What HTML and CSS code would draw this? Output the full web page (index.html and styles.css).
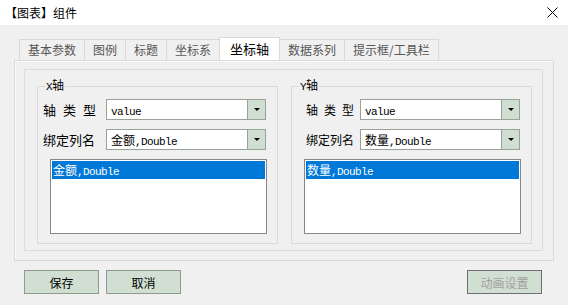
FILE: index.html
```html
<!DOCTYPE html>
<html lang="zh-CN">
<head>
    <meta charset="UTF-8">
    <title>【图表】组件</title>
    <link rel="stylesheet" href="styles.css">
</head>
<body>
    <div class="titlebar">
        <span class="title">【图表】组件</span>
        <svg class="close" width="11" height="11" viewBox="0 0 11 11">
            <path d="M0.5 0.5 L10.5 10.5 M10.5 0.5 L0.5 10.5" stroke="#000" stroke-width="1" fill="none"/>
        </svg>
    </div>

    <div class="tabs">
        <div class="tab first">基本参数</div>
        <div class="tab">图例</div>
        <div class="tab">标题</div>
        <div class="tab">坐标系</div>
        <div class="tab active">坐标轴</div>
        <div class="tab">数据系列</div>
        <div class="tab">提示框/工具栏</div>
    </div>

    <div class="panel">
        <div class="frame">
            <fieldset class="group group-x">
                <legend><span class="mono">X</span>轴</legend>
                <div class="row">
                    <span class="field-label spaced">轴类型</span>
                    <div class="combo">
                        <span class="combo-text"><span class="mono">value</span></span>
                        <span class="combo-btn"><i class="arrow"></i></span>
                    </div>
                </div>
                <div class="row">
                    <span class="field-label">绑定列名</span>
                    <div class="combo">
                        <span class="combo-text">金额<span class="mono">,Double</span></span>
                        <span class="combo-btn"><i class="arrow"></i></span>
                    </div>
                </div>
                <div class="listbox">
                    <div class="list-item">金额<span class="mono">,Double</span></div>
                </div>
            </fieldset>

            <fieldset class="group group-y">
                <legend><span class="mono">Y</span>轴</legend>
                <div class="row">
                    <span class="field-label spaced">轴类型</span>
                    <div class="combo">
                        <span class="combo-text"><span class="mono">value</span></span>
                        <span class="combo-btn"><i class="arrow"></i></span>
                    </div>
                </div>
                <div class="row">
                    <span class="field-label">绑定列名</span>
                    <div class="combo">
                        <span class="combo-text">数量<span class="mono">,Double</span></span>
                        <span class="combo-btn"><i class="arrow"></i></span>
                    </div>
                </div>
                <div class="listbox">
                    <div class="list-item">数量<span class="mono">,Double</span></div>
                </div>
            </fieldset>
        </div>
    </div>

    <div class="actions">
        <button class="btn">保存</button>
        <button class="btn">取消</button>
        <button class="btn disabled">动画设置</button>
    </div>
</body>
</html>
```

FILE: styles.css
```css
body {
    margin: 0;
    width: 568px;
    height: 305px;
    overflow: hidden;
    background-color: #f0f0f0;
    font-family: "Noto Sans CJK SC", sans-serif;
    font-size: 12px;
    color: #000;
}
.mono {
    font-family: "Liberation Mono", monospace;
    font-size: 11px;
    letter-spacing: -0.6px;
}
.titlebar {
    height: 25px;
    background-color: #fff;
    display: flex;
    align-items: center;
    justify-content: space-between;
    padding-left: 5px;
}
.title {
    font-size: 12px;
    line-height: 14px;
}
.close {
    margin-right: 10px;
}
.tabs {
    display: flex;
    align-items: flex-end;
    height: 23px;
    margin-top: 12px;
    padding-left: 19px;
}
.tab {
    box-sizing: border-box;
    height: 21px;
    line-height: 20px;
    padding: 0 8px;
    border: 1px solid #d9d9d9;
    border-left: none;
    border-bottom: none;
    color: #555;
}
.tab.first {
    border-left: 1px solid #d9d9d9;
}
.tab.active {
    height: 23px;
    line-height: 22px;
    padding: 0 10px;
    margin-left: -1px;
    border-left: 1px solid #d9d9d9;
    background-color: #fff;
    color: #000;
    font-size: 13px;
}
.panel {
    box-sizing: border-box;
    height: 201px;
    margin: 0 14px;
    border: 1px solid #d9d9d9;
    box-shadow: inset 1px 1px 0 #fafafa;
    padding: 8px 10px 9px 9px;
}
.frame {
    box-sizing: border-box;
    height: 100%;
    border: 1px solid #dcdcdc;
    display: flex;
    gap: 13px;
    padding: 8px 10px 0 12px;
}
.group {
    box-sizing: border-box;
    flex: 0 0 241px;
    min-width: 0;
    margin: 0;
    padding: 0 10px 9px 5px;
    border: 1px solid #dadada;
    align-self: flex-start;
}
.group legend {
    margin-left: 2px;
    padding: 0 1px;
    line-height: 13px;
    font-size: 12px;
}
.row {
    display: flex;
    align-items: center;
    height: 21px;
    margin-top: 9px;
}
.row:first-of-type {
    margin-top: 5px;
}
.field-label {
    flex: 1;
    font-size: 13px;
    white-space: nowrap;
}
.field-label.spaced {
    letter-spacing: 7px;
}
.group-y .field-label {
    padding-left: 9px;
    font-size: 12px;
}
.group-y .field-label.spaced {
    letter-spacing: 6px;
}
.combo {
    box-sizing: border-box;
    width: 160px;
    height: 21px;
    margin-right: 1px;
    display: flex;
    border: 1px solid #97a397;
    background-color: #fff;
}
.combo-text {
    flex: 1;
    padding-left: 4px;
    line-height: 19px;
    white-space: nowrap;
}
.combo-btn {
    width: 17px;
    border-left: 1px solid #97a397;
    background-color: #d0ded2;
    display: flex;
    align-items: center;
    justify-content: center;
}
.arrow {
    width: 0;
    height: 0;
    border-top: 3px solid #000;
    border-left: 3px solid transparent;
    border-right: 3px solid transparent;
}
.listbox {
    box-sizing: border-box;
    height: 75px;
    margin: 9px 0 0 7px;
    padding: 1px;
    border: 1px solid #828790;
    background-color: #fff;
}
.list-item {
    height: 18px;
    line-height: 18px;
    padding-left: 1px;
    background-color: #0078d7;
    color: #fff;
    white-space: nowrap;
}
.actions {
    display: flex;
    gap: 7px;
    padding: 9px 26px 0 24px;
}
.btn {
    box-sizing: border-box;
    width: 75px;
    height: 24px;
    padding: 0;
    background-color: #d0dfd2;
    border: 1px solid #8f9a8f;
    font-family: "Noto Sans CJK SC", sans-serif;
    font-size: 12px;
    color: #000;
}
.btn.disabled {
    margin-left: auto;
    color: #a0a0a0;
    border-color: #6e6e6e;
}
```
